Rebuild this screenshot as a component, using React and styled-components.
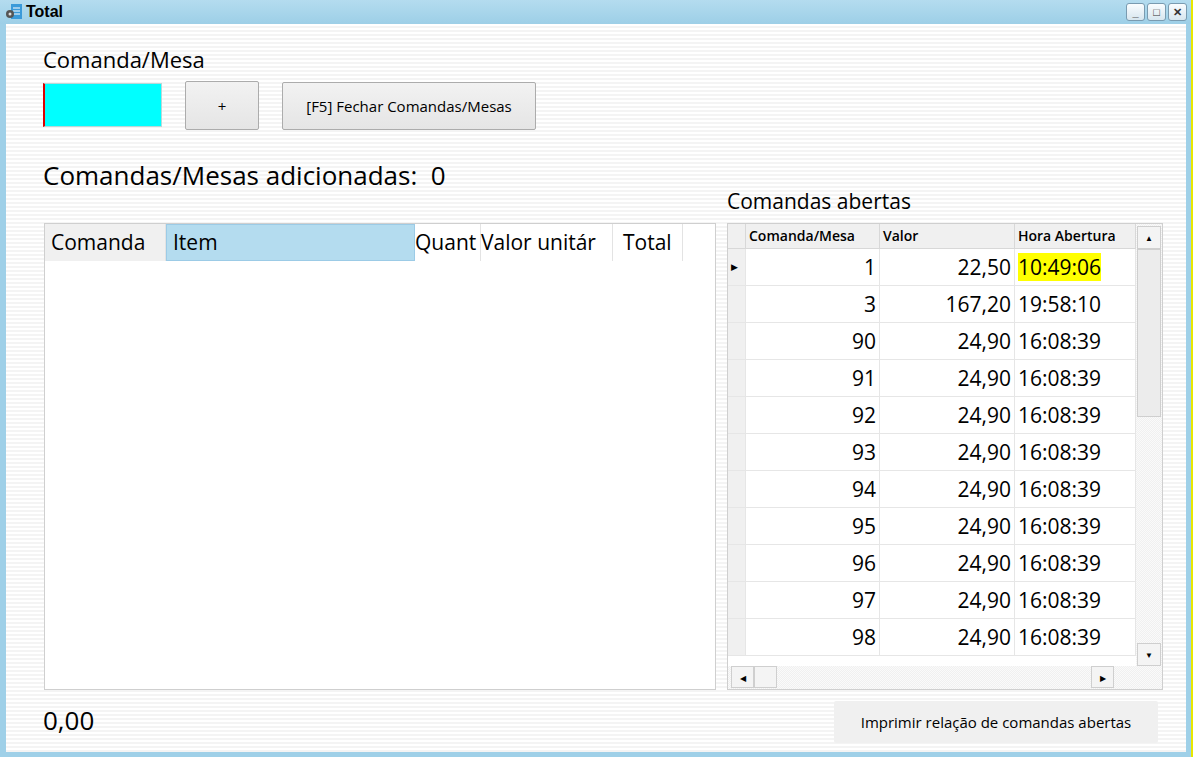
import React from "react";
import styled, { createGlobalStyle } from "styled-components";

const G = createGlobalStyle`
  html,body{margin:0;padding:0;width:1193px;height:757px;overflow:hidden;font-family:"Open Sans","Noto Sans",sans-serif;}
`;
const Win = styled.div`width:1193px;height:757px;display:flex;flex-direction:column;background:#9fd0e8;box-sizing:border-box;border-right:2px solid #e8e800;`;
const Title = styled.div`height:24px;display:flex;align-items:center;padding:0 4px;background:linear-gradient(#b4dcef,#9dcfe7);font:bold 16px "Liberation Sans",Arial,sans-serif;gap:2px;`;
const Ctrls = styled.div`margin-left:auto;display:flex;gap:2px;`;
const Ctrl = styled.div`width:17px;height:16px;border:1px solid #7a9bb0;border-radius:3px;background:linear-gradient(#fafdff,#d7e6ef);display:flex;align-items:center;justify-content:center;font-size:11px;font-weight:bold;color:#333;`;
const Body = styled.div`flex:1;margin:0 5px 5px 6px;background:repeating-linear-gradient(#ffffff 0 2px,#f4f4f4 2px 4px);padding:22px 0 0 37px;display:flex;flex-direction:column;position:relative;`;
const Label = styled.div`font-size:${p=>p.s}px;color:#000;line-height:1.2;`;
const Row = styled.div`display:flex;align-items:flex-start;gap:${p=>p.g||0}px;`;
const Input = styled.div`width:119px;height:44px;background:#00ffff;border:1px solid #b8d8d8;border-left:2px solid #d00;margin-top:1px;box-sizing:border-box;`;
const Btn = styled.div`height:${p=>p.h}px;width:${p=>p.w}px;border:1px solid #acacac;border-radius:2px;background:linear-gradient(#f2f2f2,#e5e5e5);display:flex;align-items:center;justify-content:center;font-size:15px;box-sizing:border-box;margin-top:${p=>p.mt||0}px;`;
const Grid = styled.div`border:1px solid #cfcfcf;background:#fff;box-sizing:border-box;`;
const LH = styled.div`height:37px;display:flex;font-size:21px;align-items:center;`;
const LC = styled.div`width:${p=>p.w}px;height:100%;display:flex;align-items:center;padding-left:${p=>p.pl??6}px;box-sizing:border-box;background:${p=>p.bg||"#fff"};border-right:1px solid #e3e3e3;${p=>p.blue?"border:1px solid #9ccbe6;":""}`;
const RH = styled.div`display:grid;grid-template-columns:18px 134px 135px 121px;height:25px;font-size:14px;font-weight:600;background:#f0f0f0;`;
const HC = styled.div`display:flex;align-items:center;padding-left:3px;border-right:1px solid #d8d8d8;border-bottom:1px solid #d8d8d8;`;
const DR = styled.div`display:grid;grid-template-columns:18px 134px 135px 121px;height:37px;font-size:21px;`;
const DC = styled.div`display:flex;align-items:center;justify-content:${p=>p.r?"flex-end":"flex-start"};padding:0 3px;border-right:1px solid #e6e6e6;border-bottom:1px solid #e6e6e6;background:${p=>p.rh?"#f0f0f0":"#fff"};`;
const Hl = styled.span`background:#ffff00;`;
const SB = styled.div`background:repeating-conic-gradient(#f0f0f0 0 25%,#fafafa 0 50%) 0 0/2px 2px;display:flex;`;
const Arr = styled.div`width:${p=>p.w}px;height:${p=>p.h}px;border:1px solid #cfcfcf;background:#f4f4f4;box-sizing:border-box;display:flex;align-items:center;justify-content:center;font-size:8px;`;

const rows=[["1","22,50","10:49:06"],["3","167,20","19:58:10"],...["90","91","92","93","94","95","96","97","98"].map(n=>[n,"24,90","16:08:39"])];

export default function App(){
  return <><G/><Win>
    <Title>
      <svg width="20" height="20" viewBox="0 0 20 20"><rect x="7" y="2" width="11" height="15" fill="#3a9ad9"/><path d="M9 6h7M9 9h7M9 12h7" stroke="#fff"/><circle cx="6" cy="12" r="4" fill="#555"/><circle cx="6" cy="12" r="1.5" fill="#ddd"/></svg>
      Total
      <Ctrls><Ctrl>_</Ctrl><Ctrl>□</Ctrl><Ctrl>✕</Ctrl></Ctrls>
    </Title>
    <Body>
      <Label s={22}>Comanda/Mesa</Label>
      <Row g={23} style={{marginTop:10}}>
        <Input/>
        <Btn w={74} h={49} mt={-1}>+</Btn>
        <Btn w={254} h={48}>[F5] Fechar Comandas/Mesas</Btn>
      </Row>
      <Row>
        <div style={{display:"flex",flexDirection:"column"}}>
          <Label s={26} style={{marginTop:30}}>Comandas/Mesas adicionadas:&nbsp; 0</Label>
          <Grid style={{width:672,height:467,marginTop:31,marginLeft:1}}>
            <LH>
              <LC w={121} bg="#f0f0f0">Comanda</LC>
              <LC w={249} bg="#b4dcef" blue>Item</LC>
              <LC w={66} pl={0}>Quant</LC>
              <LC w={132} pl={0}>Valor unitár</LC>
              <LC w={70} pl={10}>Total</LC>
            </LH>
          </Grid>
        </div>
        <div style={{display:"flex",flexDirection:"column",marginLeft:11}}>
          <Label s={21} style={{marginTop:59}}>Comandas abertas</Label>
          <Grid style={{width:436,height:467,marginTop:8,display:"flex",flexDirection:"column"}}>
            <div style={{display:"flex",height:442}}>
              <div style={{overflow:"hidden"}}>
                <RH><HC/><HC>Comanda/Mesa</HC><HC>Valor</HC><HC>Hora Abertura</HC></RH>
                {rows.map((r,i)=><DR key={i}>
                  <DC rh style={{fontSize:9}}>{i===0?"▶":""}</DC>
                  <DC r>{r[0]}</DC><DC r>{r[1]}</DC>
                  <DC>{i===0?<Hl>{r[2]}</Hl>:r[2]}</DC>
                </DR>)}
              </div>
              <SB style={{width:26,flexDirection:"column",alignItems:"center",paddingTop:2}}>
                <Arr w={24} h={23}>▲</Arr>
                <Arr w={24} h={168} style={{background:"#ececec"}}/>
                <div style={{flex:1}}/>
                <Arr w={24} h={23}>▼</Arr>
              </SB>
            </div>
            <SB style={{height:23,alignItems:"center",padding:"0 48px 0 3px"}}>
              <Arr w={23} h={22}>◀</Arr><Arr w={23} h={22}/>
              <div style={{flex:1}}/>
              <Arr w={23} h={22}>▶</Arr>
            </SB>
          </Grid>
        </div>
      </Row>
      <Row style={{marginTop:10,alignItems:"center"}}>
        <Label s={26}>0,00</Label>
        <Btn w={324} h={42} style={{marginLeft:"auto",marginRight:28,marginTop:1,border:"none",background:"#f0f0f0"}}>Imprimir relação de comandas abertas</Btn>
      </Row>
    </Body>
  </Win></>;
}
